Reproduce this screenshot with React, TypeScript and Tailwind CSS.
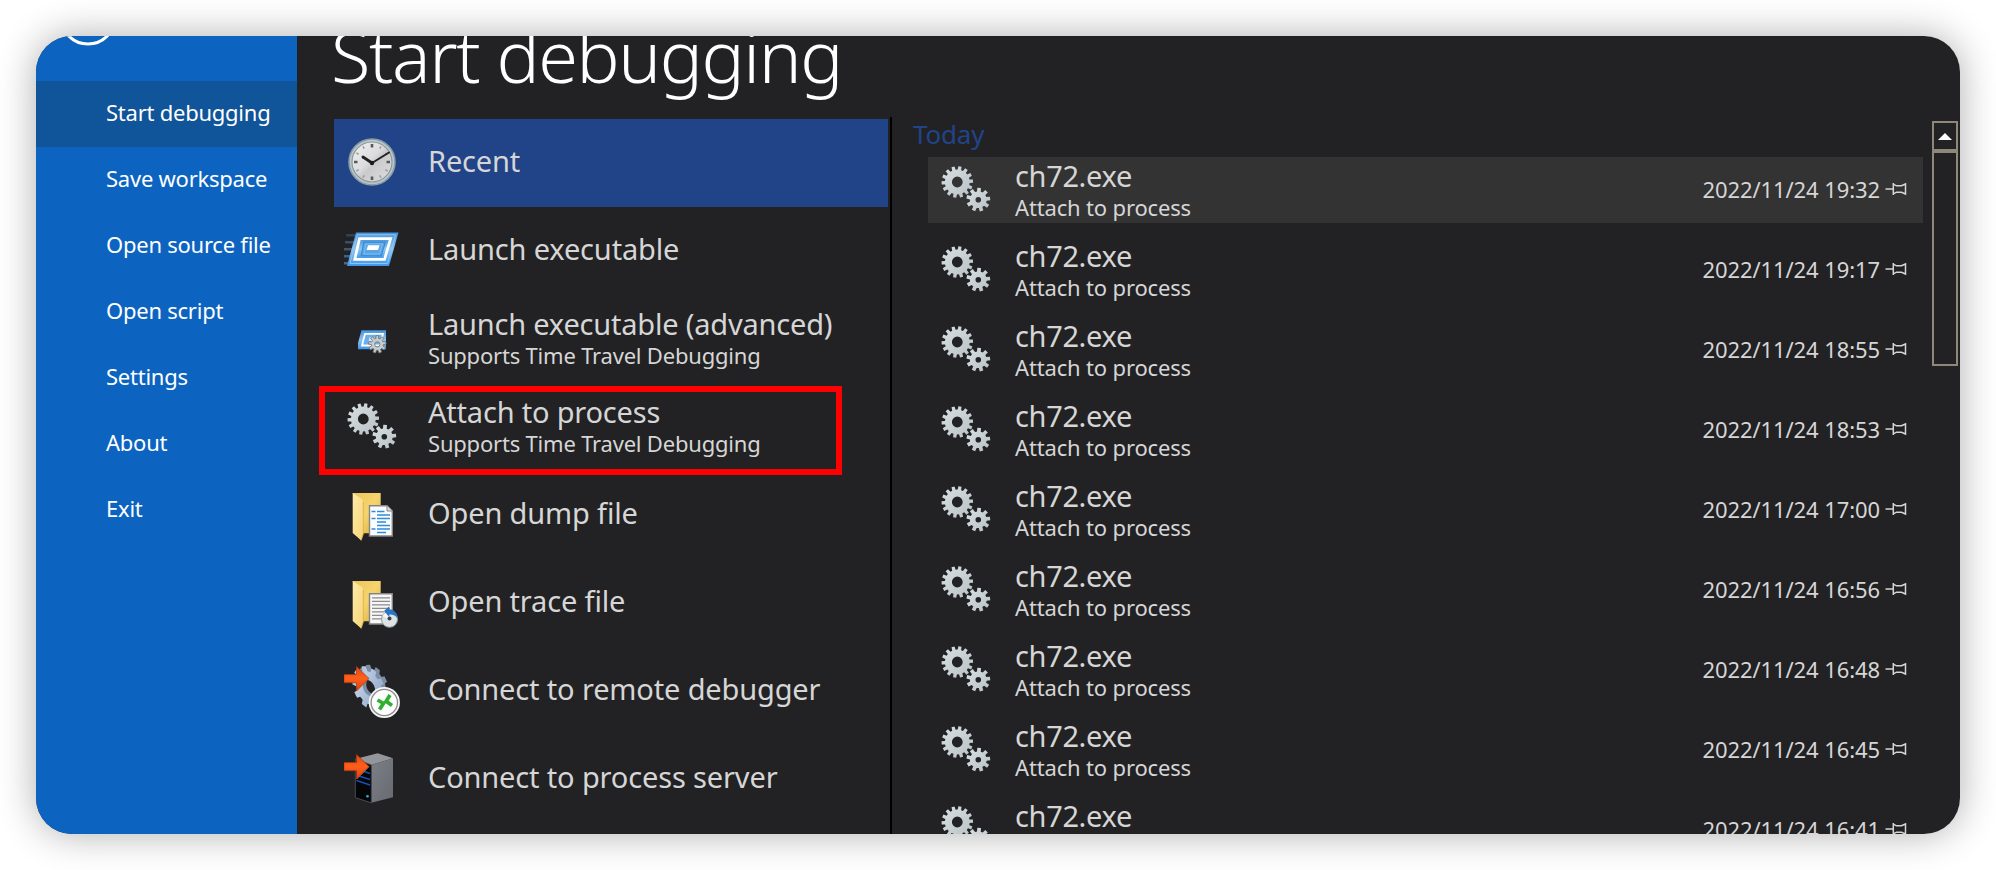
import type { ReactNode } from "react";

function gearPath(cx: number, cy: number, outer: number, inner: number, teeth: number, phase = 0) {
  const step = (Math.PI * 2) / teeth;
  const points: string[] = [];
  const add = (angle: number, r: number) =>
    points.push(`${(cx + Math.cos(angle) * r).toFixed(2)} ${(cy + Math.sin(angle) * r).toFixed(2)}`);
  for (let i = 0; i < teeth; i++) {
    const a = phase + i * step;
    add(a - step * 0.32, inner);
    add(a - step * 0.22, outer);
    add(a + step * 0.22, outer);
    add(a + step * 0.32, inner);
  }
  return `M${points.join("L")}Z`;
}

function hole(cx: number, cy: number, r: number) {
  return `M${cx - r} ${cy}a${r} ${r} 0 1 0 ${r * 2} 0a${r} ${r} 0 1 0 ${-r * 2} 0Z`;
}

function Icon({ children }: { children: ReactNode }) {
  return (
    <svg viewBox="0 0 56 56" className="size-14 shrink-0" aria-hidden="true">
      {children}
    </svg>
  );
}

function GradientDefs() {
  return (
    <svg className="absolute size-0" aria-hidden="true">
      <defs>
        <linearGradient id="silver" x1="0" y1="0" x2="1" y2="1">
          <stop offset="0" stopColor="#d9e0e4" />
          <stop offset="1" stopColor="#b7c0c4" />
        </linearGradient>
        <linearGradient id="face" x1="0" y1="0" x2="1" y2="1">
          <stop offset="0" stopColor="#f2f2f3" />
          <stop offset="0.45" stopColor="#dcdcde" />
          <stop offset="0.55" stopColor="#cacacc" />
          <stop offset="1" stopColor="#dededf" />
        </linearGradient>
        <linearGradient id="sky" x1="0" y1="0" x2="0" y2="1">
          <stop offset="0" stopColor="#4494dc" />
          <stop offset="0.5" stopColor="#8dc4f2" />
          <stop offset="1" stopColor="#3d96ea" />
        </linearGradient>
        <linearGradient id="folderBack" x1="0" y1="0" x2="1" y2="1">
          <stop offset="0" stopColor="#eec55c" />
          <stop offset="0.5" stopColor="#f5d36d" />
          <stop offset="1" stopColor="#d9ab3c" />
        </linearGradient>
        <linearGradient id="folderFront" x1="0" y1="0" x2="1" y2="1">
          <stop offset="0" stopColor="#ffeaa8" />
          <stop offset="1" stopColor="#f6d678" />
        </linearGradient>
        <linearGradient id="arrow" x1="0" y1="0" x2="0" y2="1">
          <stop offset="0" stopColor="#e04a12" />
          <stop offset="0.5" stopColor="#ff5f1a" />
          <stop offset="1" stopColor="#d8400d" />
        </linearGradient>
        <linearGradient id="steel" x1="0" y1="0" x2="0.6" y2="1">
          <stop offset="0" stopColor="#9fb0c2" />
          <stop offset="0.4" stopColor="#b9cbe4" />
          <stop offset="1" stopColor="#8fa3c4" />
        </linearGradient>
        <linearGradient id="serverSide" x1="0" y1="0" x2="1" y2="1">
          <stop offset="0" stopColor="#7d7f86" />
          <stop offset="1" stopColor="#686a71" />
        </linearGradient>
      </defs>
    </svg>
  );
}

function ClockIcon() {
  return (
    <Icon>
      <circle cx="28" cy="27" r="23" fill="#b9c6ca" stroke="#8b9ba5" strokeWidth="1.6" />
      <circle cx="28" cy="27" r="20" fill="url(#face)" stroke="#8a979c" strokeWidth="1.2" />
      {Array.from({ length: 12 }, (_, i) => (
        <line
          key={i}
          x1="28"
          x2="28"
          y1="9"
          y2={i % 3 === 0 ? 12.5 : 11.5}
          stroke={i % 3 === 0 ? "#55595c" : "#9a9ea1"}
          strokeWidth={i % 3 === 0 ? 2.6 : 1.6}
          transform={`rotate(${i * 30} 28 27)`}
        />
      ))}
      <path d="M28 28L19 22" stroke="#222" strokeWidth="2.8" strokeLinecap="round" />
      <path d="M28 28L45 17.5" stroke="#222" strokeWidth="2" strokeLinecap="round" />
      <circle cx="28" cy="28" r="2.2" fill="#1a1a1a" />
    </Icon>
  );
}

function LaunchIcon() {
  return (
    <Icon>
      <g fill="#4d7ba6">
        <path opacity="0.35" d="M2 11h10l-.6 2.4H2z" />
        <path opacity="0.5" d="M1 18h9l-.6 2.4H1z" />
        <path opacity="0.6" d="M0 25h8l-.6 2.4H0z" />
        <path opacity="0.7" d="M0 32h6.5l-.6 2.4H0z" />
        <path opacity="0.8" d="M0 39h4.5l-.6 2.4H0z" />
      </g>
      <path d="M12 9.5H54.5L45 43H3Z" fill="url(#sky)" />
      <path d="M13.3 11.8H51.5L43.5 40.5H6Z" fill="none" stroke="#8ec5f4" strokeWidth="1" />
      <path d="M15.5 15.7H46.6L40.5 36.3H10.8Z" fill="url(#sky)" stroke="#fff" strokeWidth="2.8" />
      <path d="M19.8 19.2H41.4L37.2 32.8H17.2Z" fill="#5ba5e6" stroke="#2f86d4" strokeWidth="1" />
      <path d="M21.8 20.9H38.6L35.4 31H19.8Z" fill="none" stroke="#86c0f0" strokeWidth="0.8" />
      <path d="M24 22.3H35.6L34 27H22.6Z" fill="#fff" />
    </Icon>
  );
}

function LaunchAdvancedIcon() {
  return (
    <Icon>
      <path d="M17.5 19.3H42V38.3H14V32Z" fill="url(#sky)" />
      <path d="M21 22.8H39L36 34.5H18Z" fill="#6aaeea" stroke="#fff" strokeWidth="1.8" />
      <path d="M25.500 26.500H31L30 30.500H24.500Z" fill="#d5e9fb" />
      <path
        fillRule="evenodd"
        d={gearPath(33.3, 33.3, 8.8, 6, 9, -1.57) + hole(33.3, 33.3, 2.6)}
        fill="#c7cccf"
        stroke="#74797d"
        strokeWidth="0.9"
      />
    </Icon>
  );
}

function GearsIcon() {
  return (
    <Icon>
      <path fillRule="evenodd" d={gearPath(19.3, 20, 15.8, 12.4, 14, -1.4) + hole(19.3, 20, 5.4)} fill="url(#silver)" />
      <path fillRule="evenodd" d={gearPath(40.3, 37.7, 12, 8.4, 9, -1.5) + hole(40.3, 37.7, 2.8)} fill="url(#silver)" />
    </Icon>
  );
}

function FolderShape() {
  return (
    <>
      <path d="M8.7 6H36.7V46.3H15Z" fill="url(#folderBack)" />
      <path d="M8.7 6L17 11.5Q19.3 13 19.3 16V47L17.2 53.5L8.7 46Z" fill="url(#folderFront)" />
      <path d="M19.3 15V47L17.2 53.5" fill="none" stroke="#d9ac45" strokeWidth="0.8" />
    </>
  );
}

function DumpFileIcon() {
  return (
    <Icon>
      <FolderShape />
      <path d="M25.5 18.8H43L48.3 24V49H25.5Z" fill="#fbfcfd" stroke="#858585" strokeWidth="1.4" />
      <path d="M43 18.8V24H48.3" fill="#ddd" stroke="#858585" strokeWidth="1" />
      <path
        d="M27.5 24.5H31.5M33 24.5H40.5M33 28H46M27.5 31.500H31.5M33 31.5H46M33 35H42M33 38.5H46M27.5 42H31.5M33 42H46M33 45.500H42"
        stroke="#2e8be0"
        strokeWidth="1.700"
      />
    </Icon>
  );
}

function TraceFileIcon() {
  return (
    <Icon>
      <FolderShape />
      <path d="M25.5 18.8H48.3V49H25.5Z" fill="#f7f7f7" stroke="#858585" strokeWidth="1.4" />
      <path
        d="M28 22.8H46M28 26.3H46M28 29.8H46M28 33.3H46M28 36.8H40M28 40.3H38M28 43.8H37"
        stroke="#8b8b8b"
        strokeWidth="1.3"
      />
      <circle cx="45.5" cy="44.3" r="8" fill="#dfe3e6" stroke="#8d969d" strokeWidth="1" />
      <path d="M45.5 44.3L38.5 41A8 8 0 0 1 42 37.5Z" fill="#f6f8f9" />
      <circle cx="45.5" cy="43.5" r="2" fill="#3c444b" />
      <path d="M40 36L45.3 31.3V34.2C50 34.5 53.5 38 53.8 43.5C51.5 40.2 49 39.3 45.3 39.5V42Z" fill="#2b74c2" />
    </Icon>
  );
}

function RedArrow() {
  return (
    <path
      d="M0 11.5H12.5V3.5L25 15.5L12.5 28V19.7H0Z"
      fill="url(#arrow)"
      stroke="#a93511"
      strokeWidth="0.7"
    />
  );
}

function RemoteIcon() {
  return (
    <Icon>
      <g transform="translate(25 25) rotate(-24)">
        <g transform="scale(0.66 1)">
          <path fillRule="evenodd" d={gearPath(7, -0.5, 22, 18, 10, -1.3) + hole(5, 0, 8)} fill="#7c8ea3" />
          <path fillRule="evenodd" d={gearPath(0, 0, 23, 18, 10, -1.3) + hole(0, 0, 8.5)} fill="url(#steel)" />
        </g>
      </g>
      <RedArrow />
      <circle cx="40.3" cy="39.5" r="15.6" fill="#f6f6f6" />
      <circle cx="40.3" cy="39.5" r="13.2" fill="#fff" stroke="#8c8c8c" strokeWidth="1.3" />
      <path d="M33.500 37L39.500 40.3L35.500 46.5" fill="none" stroke="#2fb12f" strokeWidth="3.700" />
      <path d="M46 32L42.2 38.2L48 42.500" fill="none" stroke="#2fb12f" strokeWidth="3.700" />
    </Icon>
  );
}

function ServerIcon() {
  return (
    <Icon>
      <path d="M11.3 8L33.7 2.3L49 7.3L27.3 14Z" fill="#94969b" />
      <path d="M27.3 14L49 7.3V46.3L27.3 51.8Z" fill="url(#serverSide)" />
      <path d="M11.3 8L27.3 14V51.8L11.3 46.7Z" fill="#050608" stroke="#4a4c50" strokeWidth="1" />
      <path d="M15 25L26 28.5M12.5 29.5L26 34M19 20L26 22.5" stroke="#1550b8" strokeWidth="1.6" />
      <circle cx="23.5" cy="45.3" r="1.3" fill="#25b8e8" />
      <path d="M12.5 28L25 15.5" stroke="#a9b4bb" strokeWidth="1" />
      <RedArrow />
    </Icon>
  );
}

function PinIcon() {
  return (
    <svg viewBox="0 0 24 14" className="h-3.5 w-6 shrink-0" fill="none" aria-hidden="true">
      <path d="M1.5 7H9" stroke="#d6d6d6" strokeWidth="1.5" />
      <path
        d="M9.3 1V13M9.3 2.2L12.5 3.8H17.5L21.5 2V12L17.5 10.2H12.5L9.3 11.8"
        stroke="#d6d6d6"
        strokeWidth="1.5"
      />
    </svg>
  );
}

const menu = ["Start debugging", "Save workspace", "Open source file", "Open script", "Settings", "About", "Exit"];

const actions: { title: string; note?: string; icon: ReactNode; marked?: boolean }[] = [
  { title: "Recent", icon: <ClockIcon /> },
  { title: "Launch executable", icon: <LaunchIcon /> },
  { title: "Launch executable (advanced)", note: "Supports Time Travel Debugging", icon: <LaunchAdvancedIcon /> },
  { title: "Attach to process", note: "Supports Time Travel Debugging", icon: <GearsIcon />, marked: true },
  { title: "Open dump file", icon: <DumpFileIcon /> },
  { title: "Open trace file", icon: <TraceFileIcon /> },
  { title: "Connect to remote debugger", icon: <RemoteIcon /> },
  { title: "Connect to process server", icon: <ServerIcon /> },
];

const times = ["19:32", "19:17", "18:55", "18:53", "17:00", "16:56", "16:48", "16:45", "16:41"];

function Sidebar() {
  return (
    <nav className="w-[261px] shrink-0 bg-[#0c64c0] text-[22px] tracking-[-0.24px] text-white">
      <div className="h-[45px] overflow-hidden">
        <svg viewBox="0 0 100 45" className="h-[45px] w-[100px]" aria-hidden="true">
          <circle cx="52" cy="-19" r="27" fill="none" stroke="#fff" strokeWidth="3" />
        </svg>
      </div>
      {menu.map((item, i) => (
        <div
          key={item}
          className={`flex h-[66px] items-center pb-[3px] pl-[70px] ${i === 0 ? "bg-[#105499]" : ""}`}
        >
          {item}
        </div>
      ))}
    </nav>
  );
}

function Actions() {
  return (
    <div className="w-[558px] shrink-0 border-r-2 border-black pt-0.5">
      {actions.map((a, i) => (
        <div
          key={a.title}
          className={`relative flex h-[88px] w-[554px] items-center gap-7 pl-[10px] ${i === 0 ? "bg-[#214488]" : ""}`}
        >
          {a.icon}
          {a.note ? (
            <div className="-mt-0.5 whitespace-nowrap">
              <div className="text-[29px] leading-[34px] tracking-[-0.2px]">{a.title}</div>
              <div className="text-[22px] leading-[28px] tracking-[-0.2px]">{a.note}</div>
            </div>
          ) : (
            <div className="pb-1 text-[29px] leading-[34px] tracking-[-0.15px] whitespace-nowrap">{a.title}</div>
          )}
          {a.marked && <div className="absolute top-[3px] -left-[15px] h-[89px] w-[523px] border-[6px] border-[#ff0000]" />}
        </div>
      ))}
    </div>
  );
}

function RecentList() {
  return (
    <div className="w-[1031px] shrink-0">
      <div className="-mt-1.5 pl-[21px] text-[26px] leading-[46px] tracking-[-0.2px] text-[#214488]">Today</div>
      <div className="flex flex-col gap-[14px] pl-9">
        {times.map((time, i) => (
          <div
            key={time}
            className={`flex h-[66px] items-center pr-[15px] pl-[10px] ${i === 0 ? "bg-[#333333]" : ""}`}
          >
            <GearsIcon />
            <div className="ml-[21px] flex-1">
              <div className="text-[29px] leading-[34px] tracking-[-0.35px]">ch72.exe</div>
              <div className="text-[22px] leading-[29px] tracking-[-0.16px]">Attach to process</div>
            </div>
            <div className="mr-1 pb-0.5 text-[22px] tracking-[-0.09px]">2022/11/24 {time}</div>
            <div className="pb-0.5">
              <PinIcon />
            </div>
          </div>
        ))}
      </div>
    </div>
  );
}

function ScrollBar() {
  return (
    <div className="mt-1 ml-[9px] flex w-[26px] shrink-0 flex-col">
      <div className="flex h-[30px] items-center justify-center border-2 border-[#8f887a]">
        <svg viewBox="0 0 14 7" className="h-[7px] w-3.5" aria-hidden="true">
          <path d="M0 7L7 0L14 7Z" fill="#fff" />
        </svg>
      </div>
      <div className="h-[215px] border-2 border-[#8f887a]" />
    </div>
  );
}

export default function App() {
  return (
    <div className="h-[870px] w-[1996px] overflow-hidden bg-white p-9 font-['Noto_Sans','Open_Sans',sans-serif]">
      <GradientDefs />
      <div className="flex h-[798px] w-[1924px] rounded-[36px] shadow-[0_0_38px_rgba(0,0,0,0.32)]">
        <div className="flex h-full w-full overflow-hidden rounded-[36px] bg-[#222224] text-[#d6d6d6]">
          <Sidebar />
          <main className="flex min-w-0 flex-1 flex-col pl-[37px]">
            <h1 className="-mt-[21px] mb-[22px] -ml-[3px] h-20 shrink-0 text-[72px] leading-[80px] font-light tracking-[-1.4px] text-white">
              Start debugging
            </h1>
            <div className="flex min-h-0 flex-1">
              <Actions />
              <RecentList />
              <ScrollBar />
            </div>
          </main>
        </div>
      </div>
    </div>
  );
}
